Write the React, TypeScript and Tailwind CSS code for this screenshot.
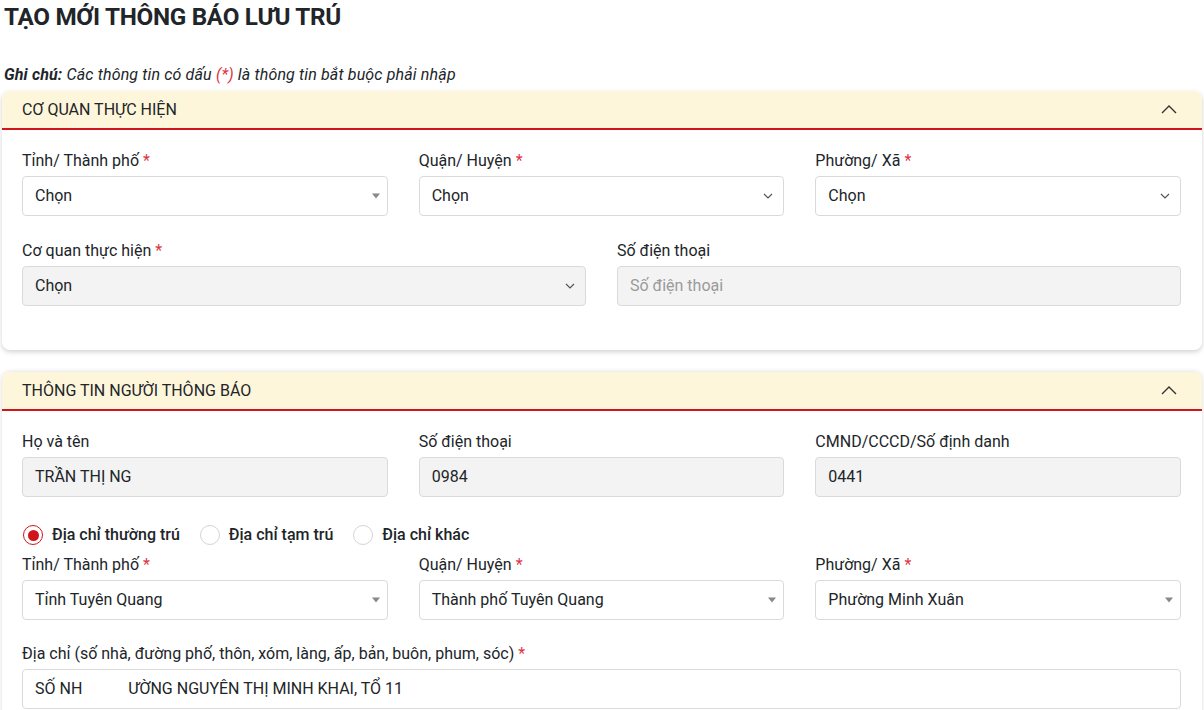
import React from "react";

const font = { fontFamily: "Roboto, 'Noto Sans', sans-serif" };

function Req() {
  return <span className="text-[#dc3545] ml-1">*</span>;
}

function Caret() {
  return (
    <span className="absolute right-[7px] top-1/2 -translate-y-1/2 w-0 h-0 border-x-[4px] border-x-transparent border-t-[5px] border-t-[#888]" />
  );
}

function ChevronDown() {
  return (
    <svg
      className="absolute right-[10px] top-1/2 -translate-y-1/2"
      width="10"
      height="6"
      viewBox="0 0 10 6"
      fill="none"
    >
      <path d="M1 1l4 4 4-4" stroke="#555" strokeWidth="1.2" />
    </svg>
  );
}

function ChevronUp() {
  return (
    <svg width="16" height="9" viewBox="0 0 16 9" fill="none">
      <path d="M1 8l7-7 7 7" stroke="#333" strokeWidth="1.4" />
    </svg>
  );
}

interface FieldProps {
  label: string;
  required?: boolean;
  children: React.ReactNode;
}

function Field({ label, required, children }: FieldProps) {
  return (
    <div>
      <div className="h-6 leading-6 text-[16px] text-[#212529] mb-[3px]">
        {label}
        {required && <Req />}
      </div>
      {children}
    </div>
  );
}

interface SelectProps {
  value: string;
  arrow: "caret" | "chevron";
  disabled?: boolean;
}

function SelectBox({ value, arrow, disabled }: SelectProps) {
  return (
    <div
      className={`relative h-10 rounded-[4px] border border-[#dadada] flex items-center pl-3 text-[16px] text-[#212529] ${
        disabled ? "bg-[#f3f3f3]" : "bg-white"
      }`}
    >
      {value}
      {arrow === "caret" ? <Caret /> : <ChevronDown />}
    </div>
  );
}

function InputBox({ children, placeholder }: { children?: React.ReactNode; placeholder?: string }) {
  return (
    <div className="h-10 rounded-[4px] border border-[#dadada] bg-[#f3f3f3] flex items-center pl-3 text-[16px] text-[#212529] whitespace-pre">
      {children ?? <span className="text-[#9a9a9a]">{placeholder}</span>}
    </div>
  );
}

function CardHeader({ title }: { title: string }) {
  return (
    <div className="h-[39px] bg-[#fef6db] border-b-2 border-[#d0161c] rounded-t-[8px] flex items-center justify-between pl-5 pr-[25px]">
      <span className="text-[16px] text-[#212529] uppercase">{title}</span>
      <ChevronUp />
    </div>
  );
}

function Radio({ label, checked }: { label: string; checked?: boolean }) {
  return (
    <label className="flex items-center gap-[9px]">
      <span
        className={`w-5 h-5 rounded-full flex items-center justify-center ${
          checked ? "border-[1.5px] border-[#d0161c]" : "border border-[#d4d4d4]"
        }`}
      >
        {checked && <span className="w-[11px] h-[11px] rounded-full bg-[#d0161c]" />}
      </span>
      <span className="text-[16px] font-medium text-[#212529]">{label}</span>
    </label>
  );
}

export default function App() {
  return (
    <div className="min-h-screen bg-white px-[2px]" style={font}>
      <h1 className="pl-[2px] pt-[3px] text-[24.25px] leading-7 font-bold text-[#212529] tracking-[-0.3px]">
        TẠO MỚI THÔNG BÁO LƯU TRÚ
      </h1>

      <p className="pl-[2px] mt-[34px] text-[16px] leading-5 italic text-[#212529] tracking-[0.15px]">
        <span className="font-bold">Ghi chú:</span> Các thông tin có dấu{" "}
        <span className="text-[#dc3545]">(*)</span> là thông tin bắt buộc phải nhập
      </p>

      <div className="rounded-[8px] bg-white shadow-[0_2px_5px_rgba(0,0,0,0.18)] mt-[6px]">
        <CardHeader title="Cơ quan thực hiện" />
        <div className="pl-5 pr-[21px] pt-[19px] pb-[44px]">
          <div className="grid grid-cols-3 gap-x-[31px]">
            <Field label="Tỉnh/ Thành phố" required>
              <SelectBox value="Chọn" arrow="caret" />
            </Field>
            <Field label="Quận/ Huyện" required>
              <SelectBox value="Chọn" arrow="chevron" />
            </Field>
            <Field label="Phường/ Xã" required>
              <SelectBox value="Chọn" arrow="chevron" />
            </Field>
          </div>
          <div className="grid grid-cols-2 gap-x-[31px] mt-[23px]">
            <Field label="Cơ quan thực hiện" required>
              <SelectBox value="Chọn" arrow="chevron" disabled />
            </Field>
            <Field label="Số điện thoại">
              <InputBox placeholder="Số điện thoại" />
            </Field>
          </div>
        </div>
      </div>

      <div className="rounded-t-[8px] bg-white shadow-[0_0_5px_rgba(0,0,0,0.15)] mt-[22px]">
        <CardHeader title="Thông tin người thông báo" />
        <div className="pl-5 pr-[21px] pt-[19px] pb-4">
          <div className="grid grid-cols-3 gap-x-[31px]">
            <Field label="Họ và tên">
              <InputBox>TRẦN THỊ NG</InputBox>
            </Field>
            <Field label="Số điện thoại">
              <InputBox>0984</InputBox>
            </Field>
            <Field label="CMND/CCCD/Số định danh">
              <InputBox>0441</InputBox>
            </Field>
          </div>

          <div className="flex items-center gap-[20px] mt-[26px] pl-[1px]">
            <Radio label="Địa chỉ thường trú" checked />
            <Radio label="Địa chỉ tạm trú" />
            <Radio label="Địa chỉ khác" />
          </div>

          <div className="grid grid-cols-3 gap-x-[31px] mt-[6px]">
            <Field label="Tỉnh/ Thành phố" required>
              <SelectBox value="Tỉnh Tuyên Quang" arrow="caret" />
            </Field>
            <Field label="Quận/ Huyện" required>
              <SelectBox value="Thành phố Tuyên Quang" arrow="caret" />
            </Field>
            <Field label="Phường/ Xã" required>
              <SelectBox value="Phường Minh Xuân" arrow="caret" />
            </Field>
          </div>

          <div className="mt-[22px]">
            <Field label="Địa chỉ (số nhà, đường phố, thôn, xóm, làng, ấp, bản, buôn, phum, sóc)" required>
              <div className="h-10 rounded-[4px] border border-[#dadada] bg-white flex items-center pl-3 text-[16px] text-[#212529]">
                SỐ NH<span className="inline-block w-[46px]" />ƯỜNG NGUYÊN THỊ MINH KHAI, TỔ 11
              </div>
            </Field>
          </div>
        </div>
      </div>
    </div>
  );
}
